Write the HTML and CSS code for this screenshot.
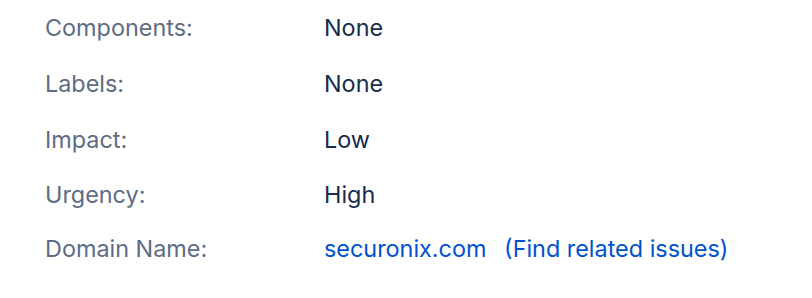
FILE: index.html
```html
<!DOCTYPE html>
<html>
<head>
    <title>Issue details</title>
    <meta charset="UTF-8">
    <link rel="stylesheet" href="styles.css">
</head>
<body>
    <dl class="details">
        <dt>Components:</dt>
        <dd>None</dd>

        <dt>Labels:</dt>
        <dd>None</dd>

        <dt>Impact:</dt>
        <dd>Low</dd>

        <dt>Urgency:</dt>
        <dd>High</dd>

        <dt>Domain Name:</dt>
        <dd>
            <a href="#">securonix.com</a>
            <a href="#" class="related">(Find related issues)</a>
        </dd>
    </dl>
</body>
</html>
```

FILE: styles.css
```css
body {
    margin: 0;
    background-color: #fff;
    font-family: Inter, 'Noto Sans', sans-serif;
    font-size: 23.4px;
}

.details {
    display: grid;
    grid-template-columns: 279px auto;
    grid-template-rows: 55px 56px 56px 54px 54px;
    align-items: center;
    margin: 0;
    padding: 0 0 0 45px;
}

dt {
    color: #5e6c84;
}

dd {
    margin: 0;
    color: #172b4d;
}

a {
    color: #0052cc;
    text-decoration: none;
}

.related {
    margin-left: 11px;
}
```
